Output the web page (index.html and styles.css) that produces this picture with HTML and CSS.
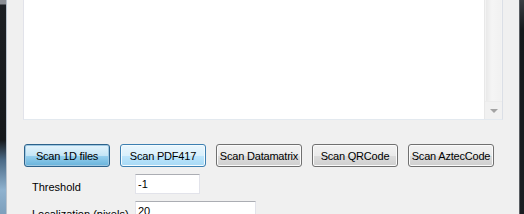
FILE: index.html
```html
<!DOCTYPE html>
<html lang="en">
<head>
    <meta charset="UTF-8">
    <title>Barcode Reader</title>
    <link rel="stylesheet" href="styles.css">
</head>
<body>
    <div class="frame frame-left"></div>
    <div class="window">
        <div class="results">
            <div class="results-text"></div>
            <div class="scrollbar">
                <div class="scroll-track"></div>
                <div class="scroll-down"><span class="arrow"></span></div>
            </div>
        </div>

        <div class="button-row">
            <button class="btn pressed">Scan 1D files</button>
            <button class="btn hot">Scan PDF417</button>
            <button class="btn">Scan Datamatrix</button>
            <button class="btn">Scan QRCode</button>
            <button class="btn">Scan AztecCode</button>
        </div>

        <div class="field">
            <label class="field-label">Threshold</label>
            <input class="field-input small" type="text" value="-1">
        </div>
        <div class="field">
            <label class="field-label">Localization (pixels)</label>
            <input class="field-input wide" type="text" value="20">
        </div>
    </div>
    <div class="frame frame-right"></div>
</body>
</html>
```

FILE: styles.css
```css
body {
    margin: 0;
    padding: 0;
    width: 524px;
    height: 214px;
    overflow: hidden;
    display: flex;
    background: #f0f0f0;
    font-family: "Liberation Sans", Arial, sans-serif;
    font-size: 11px;
    color: #000000;
}
.frame {
    height: 214px;
    flex-shrink: 0;
}
.frame-left {
    width: 6px;
    border-right: 1px solid #b9c2cc;
    background: linear-gradient(to bottom, #8b8f95 0, #8b8f95 4px, #1d2024 5px, #15181b 140px, #4b6a86 160px, #8fb2cf 190px, #7d9fbc 214px);
}
.frame-right {
    width: 4px;
    border-left: 1px solid #5a5e63;
    background: linear-gradient(to bottom, #3a3d42 0, #15181b 30px, #1b1e22 214px);
}
.window {
    flex: 1;
    padding-left: 16px;
}
.results {
    width: 478px;
    height: 119px;
    display: flex;
    background: #ffffff;
    border-left: 1px solid #e2e3ea;
    border-right: 1px solid #dbdfe6;
    border-bottom: 1px solid #e3e9ef;
}
.results-text {
    flex: 1;
}
.scrollbar {
    width: 17px;
    display: flex;
    flex-direction: column;
    background: #f3f3f3;
    border-left: 1px solid #e8e8e8;
}
.scroll-track {
    flex: 1;
    margin: 0 1px;
    background: linear-gradient(to right, #e9e9e9, #f5f5f5 40%, #f1f1f1);
}
.scroll-down {
    height: 17px;
    display: flex;
    align-items: center;
    justify-content: center;
    background: #f1f1f1;
    border-top: 1px solid #ececec;
}
.arrow {
    width: 0;
    height: 0;
    border-left: 4px solid transparent;
    border-right: 4px solid transparent;
    border-top: 4px solid #a3a3a3;
}
.button-row {
    display: flex;
    gap: 10px;
    margin-top: 24px;
    padding-left: 1px;
}
.btn {
    width: 86px;
    height: 23px;
    padding: 0;
    font-family: "Liberation Sans", Arial, sans-serif;
    font-size: 11px;
    letter-spacing: -0.2px;
    color: #000000;
    border: 1px solid #707070;
    border-radius: 3px;
    background: linear-gradient(to bottom, #f2f2f2 0, #ebebeb 50%, #dddddd 50%, #cfcfcf 100%);
    box-shadow: inset 0 0 0 1px #fbfbfb;
}
.btn.hot {
    border-color: #3c7fb1;
    background: linear-gradient(to bottom, #eaf6fd 0, #d9f0fc 50%, #bee6fd 50%, #a7d9f5 100%);
    box-shadow: inset 0 0 0 1px #f4fbfe;
}
.btn.pressed {
    border-color: #2c628b;
    background: linear-gradient(to bottom, #e5f4fc 0, #c4e5f6 50%, #98d1ef 50%, #68b3db 100%);
    box-shadow: inset 0 0 0 1px #9ec8e2;
}
.field {
    display: flex;
    align-items: flex-start;
    margin-top: 7px;
}
.field-label {
    width: 103px;
    padding-left: 9px;
    padding-top: 7px;
    white-space: nowrap;
}
.field-input {
    box-sizing: border-box;
    height: 20px;
    padding: 0 2px;
    font-family: "Liberation Sans", Arial, sans-serif;
    font-size: 11px;
    color: #000000;
    background: #ffffff;
    border: 1px solid #e2e3ea;
    border-top-color: #abadb3;
    outline: none;
}
.field-input.small {
    width: 65px;
}
.field-input.wide {
    width: 121px;
}
```
